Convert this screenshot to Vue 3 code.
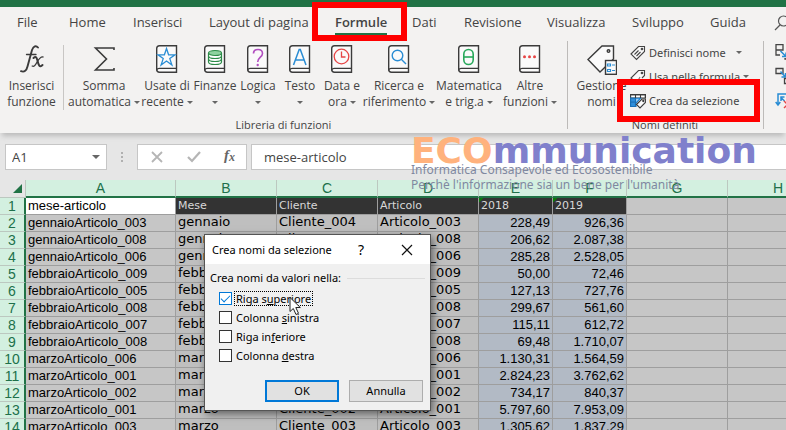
<script setup>
import { ref } from 'vue'

const tabs = ['File', 'Home', 'Inserisci', 'Layout di pagina', 'Formule', 'Dati', 'Revisione', 'Visualizza', 'Sviluppo', 'Guida']

const library = [
  { icon: 'fx', lines: ['Inserisci', 'funzione'], arrow: false },
  { icon: 'sum', lines: ['Somma', 'automatica'], arrow: true },
  { icon: 'star', lines: ['Usate di', 'recente'], arrow: true },
  { icon: 'coins', lines: ['Finanze', ''], arrow: true },
  { icon: 'logic', lines: ['Logica', ''], arrow: true },
  { icon: 'text', lines: ['Testo', ''], arrow: true },
  { icon: 'clock', lines: ['Data e', 'ora'], arrow: true },
  { icon: 'search', lines: ['Ricerca e', 'riferimento'], arrow: true },
  { icon: 'theta', lines: ['Matematica', 'e trig.a'], arrow: true },
  { icon: 'dots', lines: ['Altre', 'funzioni'], arrow: true }
]

const columns = ['A', 'B', 'C', 'D', 'E', 'F', 'G', 'H']

const rows = [
  ['mese-articolo', 'Mese', 'Cliente', 'Articolo', '2018', '2019'],
  ['gennaioArticolo_003', 'gennaio', 'Cliente_004', 'Articolo_003', '228,49', '926,36'],
  ['gennaioArticolo_008', 'gennaio', 'Cliente_003', 'Articolo_008', '206,62', '2.087,38'],
  ['gennaioArticolo_006', 'gennaio', '', 'Articolo_006', '285,28', '2.528,05'],
  ['febbraioArticolo_009', 'febbraio', '', 'Articolo_009', '50,00', '72,46'],
  ['febbraioArticolo_005', 'febbraio', '', 'Articolo_005', '127,13', '727,76'],
  ['febbraioArticolo_008', 'febbraio', '', 'Articolo_008', '299,67', '561,60'],
  ['febbraioArticolo_007', 'febbraio', '', 'Articolo_007', '115,11', '612,72'],
  ['febbraioArticolo_008', 'febbraio', '', 'Articolo_008', '69,48', '1.710,07'],
  ['marzoArticolo_006', 'marzo', '', 'Articolo_006', '1.130,31', '1.564,59'],
  ['marzoArticolo_001', 'marzo', '', 'Articolo_001', '2.824,23', '3.762,62'],
  ['marzoArticolo_002', 'marzo', '', 'Articolo_002', '734,17', '840,37'],
  ['marzoArticolo_001', 'marzo', 'Cliente_002', 'Articolo_001', '5.797,60', '7.953,09'],
  ['marzoArticolo_003', 'marzo', 'Cliente_003', 'Articolo_003', '1.305,62', '1.837,29']
]

const options = ref([
  { id: 'top', before: 'Riga s', key: 'u', after: 'periore', checked: true },
  { id: 'left', before: 'Colonna ', key: 's', after: 'inistra', checked: false },
  { id: 'bottom', before: 'Riga in', key: 'f', after: 'eriore', checked: false },
  { id: 'right', before: 'Colonna ', key: 'd', after: 'estra', checked: false }
])

const nameBox = ref('A1')
const formula = ref('mese-articolo')
</script>

<template>
  <div class="app">
    <div class="titlebar"></div>

    <nav class="tabs">
      <button v-for="t in tabs" :key="t" class="tab" :class="{ active: t === 'Formule' }">
        <span>{{ t }}</span>
      </button>
      <button class="tab find" aria-label="Cerca">
        <svg width="16" height="16" viewBox="0 0 16 16" fill="none" stroke="#555" stroke-width="1.2">
          <circle cx="9.500" cy="6" r="5" /><path d="M6 10 L1 15" />
        </svg>
      </button>
    </nav>

    <section class="ribbon">
      <div class="group library">
        <div class="tools">
          <button v-for="b in library" :key="b.icon" class="big">
            <svg v-if="b.icon === 'fx'" width="28" height="28" viewBox="0 0 28 28" fill="none" stroke="#3b3b3b" stroke-linecap="round">
              <path d="M20 2.500 C18 .2 15.500 1 14 5 L9.500 21.500 C8.500 25.500 6.500 27.500 3 26.200" stroke-width="1.900" />
              <path d="M8.500 9.500 H18" stroke-width="1.300" />
              <path d="M15.500 13 C18 10.500 18.800 13 19.600 16 C20.500 20 21.500 23 24.500 20" stroke-width="2" />
              <path d="M25 12 C22 11.500 20 15.500 18.500 18 C17.300 20.500 15.800 22 14.200 21" stroke-width="1.300" />
            </svg>
            <svg v-else-if="b.icon === 'sum'" width="28" height="28" viewBox="0 0 28 28" fill="none" stroke="#3b3b3b" stroke-width="1.600">
              <path d="M24 5 V3 H5.500 L16.500 14 L5.500 25 H24 V23" />
            </svg>
            <svg v-else width="22" height="28" viewBox="0 0 22 28" fill="none">
              <path d="M3.500 .7 H20.500 V27.300 H3.500 Q.7 27.300 .7 24.500 V3.500 Q.7 .7 3.500 .7 Z" fill="#fafafa" stroke="#3b3b3b" stroke-width="1.400" />
              <path d="M20.500 23.300 H3.500 Q.8 23.300 .8 25.500" stroke="#3b3b3b" stroke-width="1.300" />
              <path v-if="b.icon === 'star'" d="M10.500 3.500 L12.600 9.800 H19 L13.800 13.600 L15.900 20 L10.500 16 L5.100 20 L7.200 13.600 L2 9.800 H8.400 Z" stroke="#2a8dd4" stroke-width="1.300" />
              <g v-else-if="b.icon === 'coins'" stroke="#2c8b48" stroke-width="1.200">
                <path d="M4.500 8 V17 C4.500 20.300 17.500 20.300 17.500 17 V8" fill="#fff" />
                <ellipse cx="11" cy="8" rx="6.500" ry="2.500" fill="#8fd3a0" />
                <path d="M4.500 11 C4.500 14.300 17.500 14.300 17.500 11 M4.500 14 C4.500 17.300 17.500 17.300 17.500 14" />
              </g>
              <g v-else-if="b.icon === 'logic'">
                <path d="M6.500 8.500 C6.500 3.200 15.500 3.200 15.500 8.500 C15.500 12 10.700 12.500 10.700 17" stroke="#b14fc0" stroke-width="1.600" />
                <circle cx="10.700" cy="20" r="1.200" fill="#b14fc0" />
              </g>
              <path v-else-if="b.icon === 'text'" d="M4.500 20 L10.200 4.500 H11.300 L17 20 M6.500 15 H15" stroke="#2a8dd4" stroke-width="1.500" />
              <g v-else-if="b.icon === 'clock'" stroke="#e64545" stroke-width="1.300">
                <circle cx="10.500" cy="11.500" r="7.300" /><path d="M10.500 6.500 V12 H14.500" />
              </g>
              <g v-else-if="b.icon === 'search'" stroke="#2a8dd4" stroke-width="1.400">
                <circle cx="9.500" cy="10.500" r="5.300" /><path d="M13.300 14.300 L18 19" />
              </g>
              <g v-else-if="b.icon === 'theta'" stroke="#27a85a" stroke-width="1.600">
                <rect x="5.800" y="4.500" width="9.400" height="15" rx="4.700" /><path d="M6 12 H15" />
              </g>
              <g v-else fill="#e64545">
                <circle cx="5.500" cy="11.700" r="1.500" /><circle cx="10.500" cy="11.700" r="1.500" /><circle cx="15.500" cy="11.700" r="1.500" />
              </g>
            </svg>
            <span class="caption">{{ b.lines[0] }}</span>
            <span class="caption">{{ b.lines[1] }}<i v-if="b.arrow" class="arrow" :class="{ lone: !b.lines[1] }"></i></span>
          </button>
        </div>
        <div class="group-name">Libreria di funzioni</div>
      </div>

      <div class="group names">
        <div class="tools">
          <button class="big">
            <svg width="30" height="30" viewBox="0 0 30 30" fill="none" stroke="#3b3b3b" stroke-width="1.400">
              <path d="M1 14.500 L15 1 H26.500 V14 L13 27 Z" fill="#fafafa" />
              <circle cx="21.500" cy="6" r="1.300" />
              <rect x="18.500" y="15.500" width="11" height="13.800" fill="#fafafa" />
              <path d="M20.500 19 h3 v2 h-3z M20.500 24.500 h3 v2 h-3z M25 20 h3 M25 25.500 h3" stroke="#2a8dd4" stroke-width="1.200" />
            </svg>
            <span class="caption">Gestione</span>
            <span class="caption">nomi</span>
          </button>
          <div class="stack">
            <button class="small">
              <svg width="16" height="16" viewBox="0 0 16 16" fill="none" stroke="#444" stroke-width="1.100">
                <path d="M1 9 L8.500 1.500 H14.500 V6.500 L6.500 14.500 Z" fill="#fafafa" /><circle cx="12" cy="4" r=".8" />
                <path d="M4.500 9.500 L8.500 5.500 M6.500 11 L10.500 7" />
              </svg>
              <span>Definisci nome</span><i class="arrow far"></i>
            </button>
            <button class="small">
              <svg width="16" height="16" viewBox="0 0 16 16" fill="none" stroke="#444" stroke-width="1.100">
                <path d="M4.500 12.500 L1 9 L8.500 1.500 H14.500 V6.500 L12 9" fill="#fafafa" /><circle cx="12" cy="4" r=".8" />
                <path d="M6 15 L10 8" stroke="#777" />
              </svg>
              <span>Usa nella formula</span><i class="arrow near"></i>
            </button>
            <button class="small boxed">
              <svg width="16" height="16" viewBox="0 0 16 16" fill="none" stroke="#3b3b3b" stroke-width="1.100">
                <path d="M.6 1.600 H15.400 V5 H.6 Z" fill="#fff" />
                <path d="M.6 5.200 H10.500 L6 10 V13.500 H.6 Z" fill="#9fd0f5" stroke="#1a7fd0" />
                <path d="M.6 5.200 H5.500 V9 H.6 Z M.6 9.300 H5.500 V13.500 H.6 Z" fill="#2f8fdc" stroke="#1a6fb5" />
                <path d="M5.500 1.600 V5 M10.500 1.600 V5 M.6 1.600 H15.400 V5" />
                <path d="M6.500 11.500 L12 6 H15.400 V9.500 L10 15 Z" fill="#fafafa" /><circle cx="13.300" cy="8" r=".6" />
              </svg>
              <span>Crea da selezione</span>
            </button>
          </div>
        </div>
        <div class="group-name">Nomi definiti</div>
      </div>

      <div class="group audit">
        <svg width="24" height="66" viewBox="0 0 24 66" fill="none" stroke="#444" stroke-width="1.300">
          <path d="M1 .7 H8 V6 H1 Z M1 6 V11 H5" />
          <path d="M5.500 7 L11 12.500 M11 8.500 V12.500 H7" stroke="#2a8dd4" stroke-width="1.500" />
          <path d="M13 10.500 H9.500 V16 H16" stroke="none" /><path d="M16 15 H10 V14 M13 9 H16" />
          <path d="M1 24.500 H8 V29.500 H1 Z" />
          <path d="M5.500 27.500 L10.500 33 M10.500 29 V33 H6.500" stroke="#2a8dd4" stroke-width="1.500" />
          <path d="M16 34.500 H9.500 V39.500 H16" />
          <path d="M3 60 V50 H16 M.7 58 L3 61 L5.300 58 M5.500 53 L9.500 57 M6 57 V53 H9.500" stroke="#2a8dd4" stroke-width="1.500" />
          <path d="M9 57 L16 64 M16 57 L9 64" stroke="#e64545" />
        </svg>
      </div>
    </section>

    <section class="formula-bar">
      <div class="box name-box">
        <input v-model="nameBox" aria-label="Casella nome" />
        <button aria-label="Elenco nomi"><i class="arrow wide"></i></button>
      </div>
      <div class="grip"><i></i><i></i><i></i></div>
      <div class="box actions">
        <button aria-label="Annulla immissione">
          <svg width="12" height="12" viewBox="0 0 12 12" stroke="#b5b5b5" stroke-width="1.800"><path d="M1 1 L11 11 M11 1 L1 11" /></svg>
        </button>
        <button aria-label="Conferma">
          <svg width="14" height="12" viewBox="0 0 14 12" fill="none" stroke="#b5b5b5" stroke-width="2.200"><path d="M1 6 L5 10 L13 1" /></svg>
        </button>
        <button class="fx" aria-label="Inserisci funzione"><em>f</em><em class="x">x</em></button>
      </div>
      <div class="box entry"><input v-model="formula" aria-label="Formula" /></div>
    </section>

    <section class="sheet">
      <table>
        <colgroup>
          <col class="c-head" /><col class="c-a" /><col class="c-w" /><col class="c-w" /><col class="c-w" />
          <col class="c-n" /><col class="c-n" /><col class="c-w" /><col class="c-w" />
        </colgroup>
        <thead>
          <tr>
            <th class="corner"><i></i></th>
            <th v-for="c in columns" :key="c">{{ c }}</th>
          </tr>
        </thead>
        <tbody>
          <tr v-for="(r, i) in rows" :key="i" :class="{ first: i === 0 }">
            <th>{{ i + 1 }}</th>
            <td v-for="(c, j) in columns" :key="c" :class="'col-' + c.toLowerCase()">{{ r[j] }}</td>
          </tr>
        </tbody>
      </table>
    </section>

    <aside class="watermark">
      <div class="brand"><span class="eco">ECO</span>mmunication</div>
      <div class="motto">Informatica Consapevole ed Ecosostenibile</div>
      <div class="motto">Perchè l'informazione sia un bene per l'umanità</div>
    </aside>

    <form class="dialog" role="dialog" aria-labelledby="dlg-title" @submit.prevent>
      <header>
        <span id="dlg-title" class="dlg-title">Crea nomi da selezione</span>
        <button type="button" class="help">?</button>
        <button type="button" class="close" aria-label="Chiudi">
          <svg width="12" height="12" viewBox="0 0 12 12" stroke="#111" stroke-width="1.200"><path d="M1 1 L11 11 M11 1 L1 11" /></svg>
        </button>
      </header>
      <div class="fields" role="group" aria-labelledby="dlg-legend">
        <div class="legend"><span id="dlg-legend">Crea nomi da valori nella:</span></div>
        <div v-for="o in options" :key="o.id" class="option">
          <input :id="o.id" v-model="o.checked" type="checkbox" />
          <label :for="o.id" :class="{ focused: o.id === 'top' }">{{ o.before }}<u>{{ o.key }}</u>{{ o.after }}</label>
        </div>
      </div>
      <footer>
        <button type="submit" class="ok">OK</button>
        <button type="button">Annulla</button>
      </footer>
      <svg class="pointer" width="13" height="20" viewBox="0 0 13 20" fill="#fff" stroke="#222" stroke-width="1">
        <path d="M1 1.500 V15.500 L4.300 12.500 L7 18.500 L9.500 17.300 L6.800 11.500 H11.300 Z" />
      </svg>
    </form>
  </div>
</template>

<style>
body {
  margin: 0;
}
</style>

<style scoped>
.app {
  position: relative;
  height: 100vh;
  overflow: hidden;
  display: flex;
  flex-direction: column;
  background: #e6e6e6;
  color: #444;
  font: 12px/16px "Open Sans", sans-serif;
}
* {
  box-sizing: border-box;
}
button,
input {
  font: inherit;
  color: inherit;
  border: 0;
  padding: 0;
  margin: 0;
  background: none;
}
.titlebar {
  flex: none;
  height: 7px;
  background: #217346;
}
.tabs {
  flex: none;
  display: grid;
  grid-template-columns: 52px 64px 76px 126px 77px 52px 83px 85px 78px 64px 1fr;
  height: 33px;
  padding-left: 17px;
  background: #f3f2f1;
  font-size: 13px;
}
.tab {
  position: relative;
  justify-self: start;
  align-self: start;
  padding: 7px 0 3px;
  white-space: nowrap;
}
.tab.active {
  font-weight: 600;
  border-bottom: 2px solid #217346;
}
.tab.active::after {
  content: "";
  position: absolute;
  inset: -5px -20px -8px -23px;
  border: 6px solid #f00;
  z-index: 2;
}
.tab.find {
  padding-top: 8px;
}
.ribbon {
  position: relative;
  flex: none;
  display: flex;
  height: 93px;
  background: #f3f2f1;
  box-shadow: 0 5px 5px -2px #bbb;
}
.group {
  display: flex;
  flex-direction: column;
  flex: none;
  position: relative;
}
.group + .group::before {
  content: "";
  position: absolute;
  left: 0;
  top: 1px;
  bottom: 4px;
  width: 1px;
  background: #bdbbb9;
}
.library {
  width: 567px;
}
.library .tools {
  display: grid;
  grid-template-columns: 64px 80px 46px 50px 36px 48px 36px 78px 62px 60px;
}
.library .big:first-child {
  border-right: 1px solid #c8c6c4;
}
.names {
  width: 196px;
}
.names .tools {
  display: flex;
}
.names .big {
  width: 63px;
  padding-left: 6px;
}
.tools {
  height: 77px;
  padding-top: 5px;
}
.big {
  display: flex;
  flex-direction: column;
  align-items: center;
  height: 65px;
}
.big > svg {
  flex: none;
  margin-bottom: 5px;
}
.names .big > svg {
  margin-bottom: 3px;
}
.caption {
  height: 16px;
  white-space: nowrap;
}
.arrow {
  display: inline-block;
  vertical-align: middle;
  margin: 0 0 1px 3px;
  border: 3px solid transparent;
  border-top-color: #666;
  border-bottom: 0;
}
.arrow.lone {
  margin-left: 0;
}
.arrow.near {
  margin-left: 0;
}
.arrow.far {
  margin-left: 7px;
}
.arrow.wide {
  border-width: 4px 4px 0;
  margin: 0;
}
.group-name {
  text-align: center;
  font-size: 11px;
}
.stack {
  display: flex;
  flex-direction: column;
  align-items: flex-start;
  gap: 8px;
  font-family: "Noto Sans", sans-serif;
  font-size: 11px;
}
.small {
  position: relative;
  display: flex;
  align-items: center;
  gap: 3px;
  height: 16px;
  white-space: nowrap;
}
.small.boxed::after {
  content: "";
  position: absolute;
  inset: -14px -21px -13px -13px;
  border: 6px solid #f00;
  z-index: 2;
}
.audit {
  flex: 1 1 0;
  overflow: hidden;
  padding: 4px 0 0 12px;
}
.formula-bar {
  flex: none;
  display: flex;
  height: 47px;
  padding: 11px 0 10px 5px;
  font-size: 13px;
}
.box {
  display: flex;
  align-items: center;
  height: 26px;
  background: #fff;
  border: 1px solid #c6c6c6;
}
.name-box {
  width: 102px;
  padding: 0 6px;
}
.name-box input {
  flex: 1;
  min-width: 0;
}
.name-box button {
  display: flex;
}
.grip {
  width: 30px;
  display: flex;
  flex-direction: column;
  align-items: center;
  justify-content: center;
  gap: 2px;
}
.grip i {
  width: 2px;
  height: 2px;
  background: #b0b0b0;
}
.actions {
  width: 110px;
  justify-content: space-between;
  padding: 0 11px 0 13px;
}
.actions button {
  display: flex;
}
.actions .fx {
  font: 700 15px/20px "Liberation Serif", serif;
  color: #666;
}
.fx .x {
  font-size: 12px;
  line-height: 24px;
}
.entry {
  flex: 1;
  margin-left: 4px;
  padding-left: 12px;
  border-right: 0;
}
.entry input {
  width: 100%;
}
.sheet {
  flex: 1;
  min-height: 0;
  overflow: hidden;
}
table {
  width: 829px;
  table-layout: fixed;
  border-collapse: separate;
  border-spacing: 0;
  color: #000;
  font: 13px/16px "Liberation Sans", sans-serif;
}
.c-head { width: 26px; }
.c-a { width: 150px; }
.c-w { width: 101px; }
.c-n { width: 74px; }
tr {
  height: 17px;
}
th,
td {
  height: 17px;
  padding: 0;
  white-space: nowrap;
  overflow: hidden;
  border-right: 1px solid #9e9e9e;
  border-bottom: 1px solid #9e9e9e;
}
th {
  font-size: 14px;
  font-weight: 400;
  color: #20704a;
  background: #d3f0e0;
  border-color: #bcc8c0;
}
thead th {
  border-bottom: 2px solid #217346;
}
thead .corner {
  background: #e6e6e6;
  border-bottom: 1px solid #bcc8c0;
}
.corner i {
  display: block;
  width: 0;
  margin-left: 13px;
  border-left: 9px solid transparent;
  border-bottom: 9px solid #217346;
}
tbody th {
  border-right: 2px solid #217346;
}
td {
  padding: 0 2px;
  background: #c6c6c6;
}
.col-b,
.col-c,
.col-d {
  background: #bfbfbf;
  font: 13px/14px "DejaVu Sans", sans-serif;
  vertical-align: top;
}
.col-e,
.col-f {
  background: #b2bac5;
  text-align: right;
}
.first .col-a {
  background: #fff;
}
.first .col-b,
.first .col-c,
.first .col-d,
.first .col-e,
.first .col-f {
  background: #333;
  color: #d8d8d8;
  font: 11px/16px "DejaVu Sans", sans-serif;
  text-align: left;
}
.first .col-e,
.first .col-f {
  background: linear-gradient(135deg, #0a7a0a 3px, #333 3px);
}
.watermark {
  position: absolute;
  left: 411px;
  top: 134px;
  white-space: nowrap;
  pointer-events: none;
}
.brand {
  font: 700 36px/34px "DejaVu Sans", sans-serif;
  color: #8080cc;
  height: 28px;
}
.eco {
  color: #ffb27d;
}
.motto {
  font: 12px/15px "Noto Sans", sans-serif;
  color: #8088a0;
}
.dialog {
  position: absolute;
  left: 204px;
  top: 234px;
  width: 227px;
  background: #f0f0f0;
  border: 1px solid #555;
  color: #000;
  box-shadow: 2px 3px 8px rgba(0, 0, 0, 0.5);
  font-family: "Noto Sans", sans-serif;
  font-size: 11px;
}
.dialog header {
  display: flex;
  align-items: center;
  height: 29px;
  padding: 0 17px 0 7px;
  background: #fff;
}
.dlg-title {
  flex: 1;
}
.help {
  font-size: 14px;
  margin-right: 37px;
}
.close {
  display: flex;
}
.fields {
  padding: 6px 5px 0;
}
.legend {
  display: flex;
  align-items: center;
  gap: 6px;
  height: 16px;
  margin-bottom: 3px;
}
.legend::after {
  content: "";
  flex: 1;
  height: 1px;
  background: #dcdcdc;
}
.option {
  display: flex;
  align-items: center;
  gap: 2px;
  height: 19px;
  padding-left: 9px;
}
.option input {
  appearance: none;
  width: 13px;
  height: 13px;
  border: 1px solid #333;
  background: #fff;
}
.option input:checked {
  display: grid;
  place-content: center;
  border-color: #0078d7;
}
.option input:checked::before {
  content: "";
  width: 8px;
  height: 4px;
  margin-bottom: 2px;
  border: solid #0078d7;
  border-width: 0 0 1px 1px;
  transform: rotate(-45deg);
}
.option label {
  line-height: 13px;
  padding: 0 1px;
  border: 1px solid transparent;
}
.option label.focused {
  border: 1px dotted #000;
}
.dialog footer {
  display: flex;
  justify-content: flex-end;
  gap: 10px;
  padding: 15px 7px 8px;
}
.dialog footer button {
  width: 74px;
  height: 22px;
  background: #e1e1e1;
  border: 1px solid #adadad;
}
.dialog footer .ok {
  border: 2px solid #0078d7;
}
.pointer {
  position: absolute;
  left: 84px;
  top: 61px;
}
</style>
